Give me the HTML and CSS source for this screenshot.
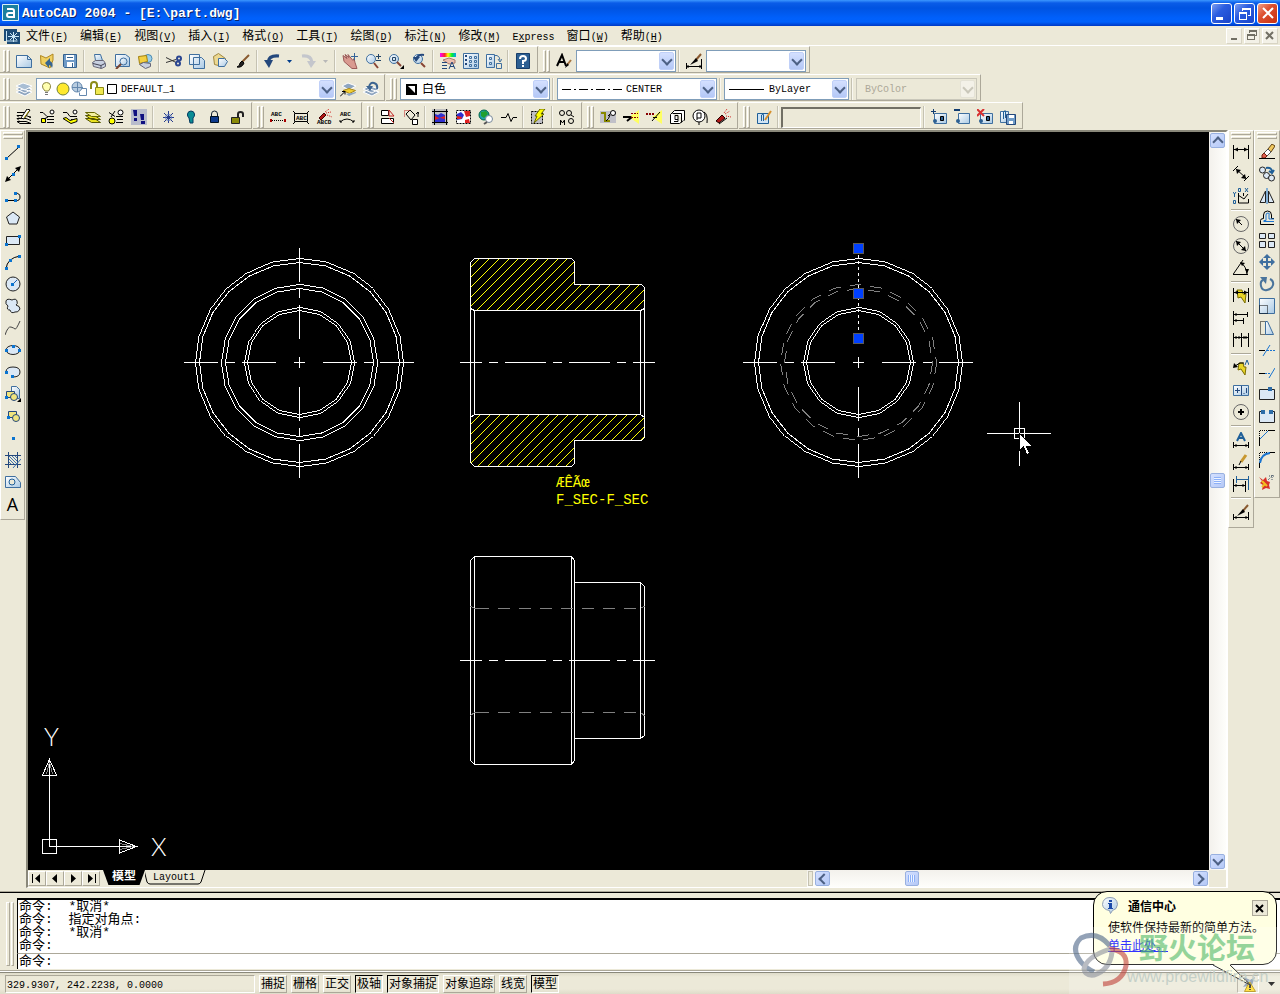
FILE: index.html
```html
<!DOCTYPE html>
<html lang="zh-CN">
<head>
    <meta charset="UTF-8">
    <meta name="viewport" content="width=device-width, initial-scale=1.0">
    <title>AutoCAD 2004 - [E:\part.dwg]</title>
    <link rel="stylesheet" href="styles.css">
</head>
<body>
    <!-- Shared gradients -->
    <svg class="defs" aria-hidden="true">
        <defs>
            <linearGradient id="paper" x1="0" y1="0" x2="1" y2="1"><stop offset="0" stop-color="#fff"/><stop offset="1" stop-color="#a9c9e4"/></linearGradient>
            <linearGradient id="rainbow"><stop offset="0" stop-color="#f0f"/><stop offset=".3" stop-color="#f22"/><stop offset=".5" stop-color="#ff0"/><stop offset=".75" stop-color="#0e3"/><stop offset="1" stop-color="#09f"/></linearGradient>
        </defs>
    </svg>

    <!-- Title bar -->
    <header class="titlebar">
        <svg class="app-logo" width="18" height="18"><path fill="#1b7f9e" stroke="#d8f0f5" d="M.5.5h16v16H.5z"/><path fill="none" stroke="#fff" stroke-width="2" d="M5 5h5q2 0 2 2v6H7q-2 0-2-2t2-2h5"/></svg>
        <h1>AutoCAD 2004 - [E:\part.dwg]</h1>
        <div class="window-buttons">
            <button aria-label="最小化"><svg width="19" height="19"><path d="M4 13h7v3H4z"/></svg></button>
            <button aria-label="还原"><svg width="19" height="19"><path d="M7 4h9v8h-3v-1h2V6H8v1H7zM4 8h8v8H4zm1 2v5h6v-5z"/></svg></button>
            <button class="close" aria-label="关闭"><svg width="19" height="19"><path fill="none" stroke="#fff" stroke-width="2" d="M5 4l10 10M15 4L5 14"/></svg></button>
        </div>
    </header>

    <!-- Menu -->
    <nav class="menubar">
        <svg class="doc-logo" width="16" height="16"><path fill="#1c4b76" d="M0 1h13v3h3v12H3v-3H0z"/><path stroke="#c9e6f5" fill="none" d="M2.5 3v10h11M9.5 4v10M4 8.5h11M6 5l7 7M13 5l-7 7"/></svg>
        <button>文件<span>(<u>F</u>)</span></button>
        <button>编辑<span>(<u>E</u>)</span></button>
        <button>视图<span>(<u>V</u>)</span></button>
        <button>插入<span>(<u>I</u>)</span></button>
        <button>格式<span>(<u>O</u>)</span></button>
        <button>工具<span>(<u>T</u>)</span></button>
        <button>绘图<span>(<u>D</u>)</span></button>
        <button>标注<span>(<u>N</u>)</span></button>
        <button>修改<span>(<u>M</u>)</span></button>
        <button><span>E<u>x</u>press</span></button>
        <button>窗口<span>(<u>W</u>)</span></button>
        <button>帮助<span>(<u>H</u>)</span></button>
        <div class="child-buttons">
            <button aria-label="最小化窗口"><svg width="14" height="14"><path d="M4 9h6v2H4z"/></svg></button>
            <button aria-label="还原窗口"><svg width="14" height="14"><path d="M4 1h8v6h-2V6h1V3H5v1H4zM2 5h8v6H2zm1 2v3h6V7z"/></svg></button>
            <button aria-label="关闭窗口"><svg width="14" height="14"><path fill="none" stroke="#716f64" stroke-width="2" d="M3 3l7 7M10 3l-7 7"/></svg></button>
        </div>
    </nav>

    <!-- Row 1: standard + styles -->
    <div class="toolbar-row">
        <div class="toolbar">
            <i class="grip"></i>
            <button class="tool" aria-label="新建"><svg><path class="paper" d="M.5 2.500h11l4 4v8H.5z"/><path class="steel" d="M11.5 2.500v4h4"/></svg></button>
            <button class="tool" aria-label="打开"><svg><path fill="#f0d060" stroke="#b08820" d="M1.5 2.500L7 5l7-4v6l-3 8-9-4z"/><path fill="#36658f" stroke="none" d="M6 10l5-5v3q4 2 2 7-1-3-3-3v3z"/></svg></button>
            <button class="tool" aria-label="保存"><svg><path fill="#6f9bc7" stroke="#34618f" d="M1.5 1.500h13v13h-12l-1-1z"/><path fill="#fff" stroke="none" d="M4 2h8v5H4zM5 9h7v5H5z"/><path stroke="#34618f" d="M5 4.500h6M10.5 10v4"/></svg></button>
            <i class="sep"></i>
            <button class="tool" aria-label="打印"><svg><path class="paper" stroke="#556" d="M4.500 7.500l-1-6h6l2 6"/><path fill="#c8d0e0" stroke="#667" d="M1.500 9.500l3-2h8l2 3v3l-4 2-8-2z"/><path stroke="#445" d="M2 10.500l8 2 4-2M10 12.500v3"/></svg></button>
            <button class="tool" aria-label="打印预览"><svg><path class="paper" d="M1.500 1.500h10l4 3v9h-14z"/><circle class="paper" cx="9.500" cy="8.500" r="3.500" stroke="#345"/><path stroke="#743" stroke-width="2" d="M7 11l-5 5"/></svg></button>
            <button class="tool" aria-label="发布"><svg><circle fill="#9cd0ea" stroke="#4a88b0" cx="11" cy="5.500" r="4"/><path fill="#f4d040" stroke="#a08010" d="M1.500 3.500l8-1 1 6-8 2z"/><path fill="#c8d0e0" stroke="#667" d="M2.500 11.500l4-2 7 1v3l-5 2z"/></svg></button>
            <i class="sep"></i>
            <button class="tool" aria-label="剪切"><svg><path stroke="#333" d="M0 4.500l10 5M0 9.500l10-3"/><circle stroke="#2a4590" stroke-width="2" cx="13" cy="5.500" r="2"/><circle stroke="#2a4590" stroke-width="2" cx="12" cy="10.500" r="2"/></svg></button>
            <button class="tool" aria-label="复制"><svg><path class="paper" d="M.5 1.500h10v10H.5zM4.500 4.500h8l3 3v8h-11z"/></svg></button>
            <button class="tool" aria-label="粘贴"><svg><path fill="#ecd890" stroke="#a08840" d="M1.500 3.500l5-3 7 5-3 8-8-2z"/><path class="paper" d="M6.500 5.500h6l3 3-3 5h-6z"/></svg></button>
            <button class="tool" aria-label="特性匹配"><svg><path stroke="#8a5a30" stroke-width="2" d="M14 2L7 9"/><path fill="#222" d="M7 8l2 2q-2 5-7 4 3-1 3-4z"/></svg></button>
            <i class="sep"></i>
            <button class="tool" aria-label="放弃"><svg><path stroke="#24487c" stroke-width="3" d="M4 9q1-7 11-6"/><path fill="#24487c" stroke="none" d="M0 7h9l-4 8z"/></svg></button>
            <button class="drop" aria-label="放弃列表"><svg width="5" height="3"><path fill="#003c8c" d="M0 0h5L2.500 3z"/></svg></button>
            <button class="tool" aria-label="重做"><svg><path stroke="#c4c6cc" stroke-width="3" d="M12 9Q11 2 2 3"/><path fill="#c4c6cc" stroke="none" d="M16 8H7l4 7z"/></svg></button>
            <button class="drop" aria-label="重做列表"><svg width="5" height="3"><path fill="#b8b8b8" d="M0 0h5L2.500 3z"/></svg></button>
            <i class="sep"></i>
            <button class="tool" aria-label="实时平移"><svg><path fill="#d99a90" stroke="#9a5a58" d="M1 2.500l4 3-2-4 4 3-1-3 5 6 1-2 1 4 2 6h-5L2 8.500z"/><path stroke="#36659a" d="M12.500 0v7M9 3.500h7"/></svg></button>
            <button class="tool" aria-label="实时缩放"><svg><circle class="paper" cx="6" cy="6" r="4.500" stroke="#456"/><path stroke="#843" stroke-width="2" d="M9 10l4 5"/><path stroke="#246" d="M11 3.500h5M13.500 1v5M11 7.500h5"/></svg></button>
            <button class="tool" aria-label="窗口缩放"><svg><circle class="paper" cx="6" cy="6" r="4.500" stroke="#456"/><path stroke="#246" d="M4.500 4.500h3v3h-3z"/><path stroke="#843" stroke-width="2" d="M9 9l4 4"/><path class="ink" d="M16 12v4h-4z"/></svg></button>
            <button class="tool" aria-label="缩放上一个"><svg><circle class="paper" cx="7" cy="6" r="4.500" stroke="#456"/><path stroke="#24487c" stroke-width="2" d="M5 6q2-5 8-4"/><path fill="#24487c" stroke="none" d="M2 4h7L5 9z"/><path stroke="#843" stroke-width="2" d="M10 10l4 4"/></svg></button>
            <i class="sep"></i>
            <button class="tool" aria-label="特性"><svg><path fill="url(#rainbow)" stroke="none" d="M0 0h16v4H0z"/><path fill="#ecc0b0" stroke="#a87868" d="M3 7l6-2 6 2v3l-6 1z"/><path stroke="#24487c" d="M2 9.500h5M2 12.500h5M2 15.500h5M9 16l3-7 3 7M10 13.500h4"/></svg></button>
            <button class="tool" aria-label="设计中心"><svg><path class="paper" d="M.5.5h15v15H.5z"/><path stroke="#24487c" stroke-dasharray="2 2" stroke-width="2" d="M3 2v12"/><path class="steel" d="M6.500 3.500h2v2h-2zM11.500 3.500h2v2h-2zM6.500 7.500h2v2h-2zM11.500 7.500h2v2h-2zM6.500 11.500h2v2h-2zM11.500 11.500h2v2h-2z"/></svg></button>
            <button class="tool" aria-label="工具选项板"><svg><path class="paper" d="M.5 1.500h8v13h-8z"/><path class="steel" d="M3.500 4.500h2v2h-2zM3.500 9.500h2v2h-2zM8 2.500h3q3 1 3 5M12 6l2 3 2-3M10.500 10.500h5v5h-5z"/></svg></button>
            <i class="sep"></i>
            <button class="tool" aria-label="帮助"><svg><path fill="#2c5f92" stroke="#183e6a" d="M1.500.5h13v15h-13z"/><path stroke="#fff" stroke-width="2" d="M5 6q0-3 3-3t3 2.500Q11 8 8 8v3M8 12v2"/></svg></button>
        </div>
        <div class="toolbar">
            <i class="grip"></i>
            <button class="tool" aria-label="文字样式"><svg><path stroke-width="2" d="M1 13L6 2l4 11M3 9h6"/><path stroke="#a67440" stroke-width="2" d="M15 7l-4 5"/><path class="ink" d="M11 10l2 2-4 3z"/></svg></button>
            <div class="combo w-style"><select aria-label="文字样式控制"><option></option></select><b class="arrow"></b></div>
            <i class="sep"></i>
            <button class="tool" aria-label="标注样式"><svg><path stroke="#8a5a30" stroke-width="2" d="M15 1L9 8"/><path class="ink" d="M10 5l2 3-8 4z"/><path d="M.5 10v6M15.500 6v10M0 13.500h16M2 12v3M14 12v3"/></svg></button>
            <div class="combo w-style"><select aria-label="标注样式控制"><option></option></select><b class="arrow"></b></div>
        </div>
    </div>

    <!-- Row 2: layers + properties -->
    <div class="toolbar-row">
        <div class="toolbar tight-end">
            <i class="grip"></i>
            <button class="tool" aria-label="图层特性管理器"><svg><path fill="#8fa6c0" stroke="#fff" d="M0 11l7-3 9 3-7 4zM0 8l7-3 9 3-7 4z"/><path fill="#a9bed4" stroke="#fff" d="M0 5l7-3 9 3-7 4z"/></svg></button>
            <div class="combo w-layer">
                <svg class="layer-state" width="78" height="16">
                    <path fill="#ffffb0" stroke="#8a8440" d="M4 10Q1 7 1.500 4.500 2 1.500 5.500 1.500t4 3Q10 7 7.500 10z"/><path stroke="#777" fill="none" d="M4 11.500h3M4 13.500h3"/>
                    <circle cx="22" cy="8" r="6" fill="#ffe92e" stroke="#70803a"/>
                    <circle cx="36" cy="6" r="5" fill="#b8cce0" stroke="#6588ae"/><path stroke="#6588ae" fill="none" d="M36.500 1v10M31 6.500h11M40.500 7.500h5v7h-7v-3"/>
                    <path fill="none" stroke="#8c8c18" stroke-width="2" d="M50 8V4q0-3 3-3t3 3v4"/><path fill="#f0e850" stroke="#8c8c18" d="M54.500 6.500h8v7h-8z"/>
                    <path fill="#fff" stroke="#000" d="M66.500 3.500h9v9h-9z"/>
                </svg>
                <select aria-label="图层"><option>DEFAULT_1</option></select><b class="arrow"></b>
            </div>
            <button class="tool" aria-label="将对象的图层置为当前"><svg><path fill="#8fa6c0" stroke="#fff" d="M2 5l6-3 8 3-7 4z"/><path fill="#f2ce30" stroke="#a8881c" d="M3 9.500l6-2 6.500 2-6 3z"/><path fill="#8fa6c0" stroke="none" d="M6 13l3 2 7-3v-1z"/><path d="M0 15.500l5-5M2 10.500h3v3"/></svg></button>
            <button class="tool" aria-label="上一个图层"><svg><path fill="#8fa6c0" stroke="#fff" d="M0 11l7-3 9 3-7 4zM0 8l7-3 9 3-7 4z"/><path stroke="#3d6591" stroke-width="2" d="M6 6q1-5 5-4 4 1 3 6"/><path fill="#3d6591" stroke="none" d="M3 5h7l-3 5z"/></svg></button>
        </div>
        <div class="toolbar">
            <i class="grip"></i>
            <div class="combo w-color"><svg class="swatch" width="11" height="11"><path d="M0 0h11v11H0z"/><path fill="#fff" d="M2 2l7 7V2z"/></svg><select class="cjk" aria-label="颜色"><option>白色</option></select><b class="arrow"></b></div>
            <i class="sep"></i>
            <div class="combo w-ltype"><svg class="line-sample" width="62" height="3"><path stroke="#000" stroke-dasharray="9 3 2 3" d="M0 1.500h60"/></svg><select aria-label="线型"><option>CENTER</option></select><b class="arrow"></b></div>
            <i class="sep"></i>
            <div class="combo w-lweight"><svg class="line-sample" width="38" height="3"><path stroke="#000" d="M0 1.500h35"/></svg><select aria-label="线宽"><option>ByLayer</option></select><b class="arrow"></b></div>
            <i class="sep"></i>
            <div class="combo w-plot disabled"><select disabled aria-label="打印样式"><option>ByColor</option></select><b class="arrow"></b></div>
        </div>
    </div>

    <!-- Row 3: express tools -->
    <div class="toolbar-row">
        <div class="toolbar">
            <i class="grip"></i>
            <button class="tool" aria-label="图层管理"><svg><path d="M1 3.500h11M4 14.500l-3-2h9l5 2zM3 11.500l-2-2h9l5 2M3 8.500l-2-2h9l5 2M14 7v2"/><path fill="#fff" d="M5 9l6-9 3 1-6 9z"/><path stroke="#a09000" d="M13 2L8 9"/></svg></button>
            <button class="tool" aria-label="图层匹配"><svg><path fill="#ff0" d="M2.500 9.500h4v4h-4z"/><path d="M1 3.500h3l4 4h7M8 10.500h7M8 13.500h7M9 8l-4 2"/><circle fill="#fff" cx="13" cy="3" r="2"/></svg></button>
            <button class="tool" aria-label="更改为当前图层"><svg><path d="M1 3.500h4l3 4h7M9 10.500h6"/><path fill="#ff0" d="M1 9.500l3-1 4 3 7-2v3l-6 2z"/><circle fill="#fff" cx="13" cy="3" r="2"/></svg></button>
            <button class="tool" aria-label="图层隔离"><svg><path fill="#e8e020" stroke="#555500" d="M.5 9.500h9l6 4h-9zM.5 6.500h9l6 4h-9z"/><path fill="#f4f0a0" stroke="#666600" d="M.5 3.500h9l6 4h-9z"/></svg></button>
            <button class="tool" aria-label="复制到新图层"><svg><circle fill="#ff0" cx="4" cy="12" r="3"/><circle fill="#fff" cx="12.500" cy="3.500" r="2.500"/><path d="M1 3.500l6 4M7 2L3 8M8 7.500h7M9 10.500h6M8 13.500h7"/></svg></button>
            <button class="tool" aria-label="图层漫游"><svg><path fill="#b8bccc" stroke="none" d="M0 0h16v16H0z"/><path fill="#101080" stroke="none" d="M2 1h4v6H3zM3 9h3v3H3zM9 5h4v6h-3zM10 12h4v3h-4z"/></svg></button>
            <i class="sep"></i>
            <button class="tool" aria-label="图层冻结"><svg><path stroke="#283c8c" d="M8.500 2v12M3 8.500h11M4 4l9 9M13 4l-9 9"/><circle cx="8.500" cy="8.500" r="3" stroke="#5a7ac0"/></svg></button>
            <button class="tool" aria-label="图层关闭"><svg><path fill="#0a8c94" stroke="#053a60" d="M6 9Q4 7 4.500 5q.5-3 3.500-3t3.500 3Q12 7 10 9v5H7z"/></svg></button>
            <button class="tool" aria-label="图层锁定"><svg><path stroke="#123" d="M5.500 7V5q0-3 3-3t3 3v2"/><path fill="#0d3a8c" stroke="#012" d="M4.500 7.500h8v6h-8z"/></svg></button>
            <button class="tool" aria-label="图层解锁"><svg><path stroke="#222" stroke-width="2" d="M9 8V5q0-2 2.500-2T14 5v3"/><path fill="#8a8a08" stroke="#222" d="M2.500 8.500h8v6h-8z"/></svg></button>
        </div>
        <div class="toolbar">
            <i class="grip"></i>
            <button class="tool" aria-label="弧形文字"><svg><text x="1" y="7">ABC</text><path d="M0 11.500h16" stroke-dasharray="1 1"/><path fill="#a00" stroke="none" d="M0 10h2v3H0zM14 10h2v3h-2z"/></svg></button>
            <button class="tool" aria-label="文字遮罩"><svg><path d="M1.500 4.500h13v8h-13zM0 2l2 2M16 2l-2 2M0 15l2-2M16 15l-2-2"/><text x="3" y="11">ABC</text></svg></button>
            <button class="tool" aria-label="分解文字"><svg><text x="1" y="15">ABCD</text><path fill="#b01818" stroke="#400" d="M3 9l5-5 2 2-5 5z"/><path stroke="#d02020" stroke-dasharray="1 1" d="M9 3l4-3M10 4l5-1M11 6l5 2"/></svg></button>
            <button class="tool" aria-label="对齐文字"><svg><text x="1" y="7">ABC</text><path d="M1 13q7-6 14 0M1 13v-2M1 13h2M15 13v-2M15 13h-2"/></svg></button>
        </div>
        <div class="toolbar">
            <i class="grip"></i>
            <button class="tool" aria-label="多重选择"><svg><path fill="#fff" d="M1.500 1.500h7v5h-7zM1.500 9.500h12v5h-12z"/><path stroke="#c02020" d="M9 1l5 6H9zM9 9l5 5"/></svg></button>
            <button class="tool" aria-label="移动复制旋转"><svg><path d="M3 5l4-4 5 5-4 5z"/><path stroke="#c02020" stroke-dasharray="1 1" d="M1.500 7.500v-6h6"/><path fill="#fff" d="M9.500 10.500h5v5h-5zM15 8V3M13 5l2-2 1 2"/></svg></button>
            <i class="sep"></i>
            <button class="tool" aria-label="延伸修剪"><svg><path fill="#c0c0c0" stroke="none" d="M0 0h16v16H0z"/><path fill="#3030d0" stroke="none" d="M3 5l3 1 3-2 4 2v7H3z"/><path fill="#e02020" stroke="none" d="M3 7l4 2 6-2v3l-5-1-5 2z"/><path d="M2.500 0v16M14.500 0v16M0 2.500h16M0 13.500h16"/></svg></button>
            <button class="tool" aria-label="区域覆盖"><svg><path fill="#fff" stroke-dasharray="2 1" d="M1.500 1.500h14v13h-14z"/><path fill="#3030d0" stroke="none" d="M2 5l4-2 3 3-2 4-5 1z"/><path fill="#e02020" stroke="none" d="M9 2h6v5l-4 1zM2 7l5 1-1 2H2zM10 11l4-1 1 4h-5z"/></svg></button>
            <button class="tool" aria-label="图像"><svg><circle cx="6" cy="6" r="5" fill="#20a0b0" stroke="#064"/><path fill="#20a030" stroke="none" d="M3 3l5-1 2 3-4 4-3-2z"/><circle cx="11" cy="10" r="3.500" fill="#fff" stroke="#789"/><path stroke="#555" stroke-width="2" d="M9 13l-3 2"/></svg></button>
            <button class="tool" aria-label="折断线"><svg><path d="M0 8.500h5l2-4 3 8 2-4h4"/></svg></button>
            <i class="sep"></i>
            <button class="tool" aria-label="超级填充"><svg><path fill="#c0c0c8" stroke-dasharray="2 1" d="M1.500 2.500h11v12h-11z"/><path fill="#ff0" stroke="#660" d="M10 0h5l-4 5h3L4 14l3-7H5z"/></svg></button>
            <i class="sep"></i>
            <button class="tool" aria-label="移动备份"><svg><circle cx="3" cy="4" r="2.500"/><circle cx="10" cy="4" r="2.500"/><circle cx="12" cy="12" r="2.500"/><path d="M1.500 16v-5l2 3 2-3v5M12 6l3 2"/></svg></button>
        </div>
        <div class="toolbar">
            <i class="grip"></i>
            <button class="tool" aria-label="附着引线"><svg><path fill="#c0c0c8" stroke="none" d="M0 2h16v12H0z"/><path stroke="#880" stroke-width="2" d="M1 4h4v8h5"/><path d="M6 12q3-2 4-6M8 7l2-2"/><circle cx="13" cy="4" r="2.500" fill="#fff"/></svg></button>
            <button class="tool" aria-label="左引线"><svg><path fill="#ffff60" stroke="none" d="M6 8l10-7v14z"/><path stroke-width="2" d="M0 8h8M4 12l5-4"/><path stroke="#800" stroke-dasharray="2 1" d="M8 4.500h7M8 8.500h7"/></svg></button>
            <button class="tool" aria-label="右引线"><svg><path fill="#ffff60" stroke="none" d="M6 8l10-7v14z"/><path stroke="#800" stroke-width="2" stroke-dasharray="2 1" d="M0 5h8"/><path d="M6 12l8-9M7 8.500h4"/></svg></button>
            <button class="tool" aria-label="块替换"><svg><path fill="#fff" d="M5.500 1.500h10v10M5.500 1.500l-4 4v9h9l4-3M3.500 4.500h9v9"/><path d="M5 12.500h4v-6H6v4h3"/></svg></button>
            <button class="tool" aria-label="块属性"><svg><circle cx="7" cy="7" r="6" fill="#fff"/><path d="M5 11V4h4v5H5M12 3q4 2 3 11M7 13v3"/></svg></button>
            <button class="tool" aria-label="分解属性"><svg><path fill="#b01818" stroke="#200" d="M1 12l6-6 3 3-6 5z"/><path d="M4 15l8-6"/><path stroke="#d02020" stroke-dasharray="1 1" d="M9 4l3-4M10 5l5-3M11 7l5 1"/></svg></button>
        </div>
        <div class="toolbar">
            <i class="grip"></i>
            <button class="tool" aria-label="块在位编辑"><svg><path fill="#cfe4f5" stroke="#1f5f98" d="M1.500 4.500h11v10h-11z"/><path stroke="#1f5f98" d="M5.500 12V6q2-2 2 0v6"/><path stroke="#d8902c" stroke-width="2" d="M15 2L9 11"/></svg></button>
            <i class="sep"></i>
            <input class="ref-name" type="text" aria-label="参照名称" disabled>
            <i class="sep"></i>
            <button class="tool" aria-label="添加到工作集"><svg><path class="paper" stroke="#123" d="M3.500 4.500h12v10h-12z"/><path fill="#2c5f92" d="M9.500 7.500h3v4h-3z"/><circle cx="4" cy="12" r="2" fill="#2c5f92" stroke="none"/><path stroke="#123c70" d="M0 2.500h5M2.500 0v5"/></svg></button>
            <button class="tool" aria-label="从工作集删除"><svg><path class="paper" stroke="#123" d="M4.500 4.500h11v10h-11z"/><circle cx="4" cy="12" r="2" fill="#2c5f92" stroke="none"/><path stroke="#123c70" stroke-width="2" d="M0 1h6"/></svg></button>
            <button class="tool" aria-label="放弃参照修改"><svg><path class="paper" stroke="#123" d="M3.500 4.500h12v10h-12z"/><path fill="#2c5f92" d="M9.500 7.500h3v4h-3z"/><circle cx="4" cy="12" r="2" fill="#2c5f92" stroke="none"/><path stroke="#d83030" stroke-width="2" d="M0 0l7 7M7 0L0 7"/></svg></button>
            <button class="tool" aria-label="保存参照修改"><svg><path class="paper" d="M.5 2.500h8v11h-8z"/><path stroke="#1f5f98" d="M3.500 10V3q2-3 2 0v6"/><path fill="#6f9bc7" stroke="#24487c" d="M6.500 5.500h9v10h-9z"/><path fill="#fff" stroke="none" d="M9 6h5v3H9zM9 12h4v3H9z"/></svg></button>
        </div>
    </div>

    <main class="workspace">
        <!-- Draw toolbar -->
        <div class="toolbar vertical draw">
            <i class="grip"></i>
            <button class="tool" aria-label="直线"><svg><path d="M2 14L14 3"/><path class="node" d="M0 13h3v3H0zM12 1h3v3h-3z"/></svg></button>
            <button class="tool" aria-label="构造线"><svg><path d="M1 15L15 1"/><path class="ink" d="M0 16l2-6 4 4zM16 0l-2 6-4-4z"/><path class="node" d="M7 7h3v3H7z"/></svg></button>
            <button class="tool" aria-label="多段线"><svg><path d="M1 12.500h9M10 5q5 0 5 4t-4 3.500"/><path class="node" d="M0 11h3v3H0zM9 11h3v3H9zM9 4h3v3H9z"/></svg></button>
            <button class="tool" aria-label="正多边形"><svg><path class="shape" d="M8 2l6.500 5-2.500 7H4L1.500 7z"/></svg></button>
            <button class="tool" aria-label="矩形"><svg><path class="shape" d="M1.500 4.500h13v8h-13z"/><path class="node" d="M0 11h3v3H0zM13 3h3v3h-3z"/></svg></button>
            <button class="tool" aria-label="圆弧"><svg><path d="M1 15Q2 4 15 2"/><path class="node" d="M0 13h3v3H0zM4 5h3v3H4zM13 1h3v3h-3z"/></svg></button>
            <button class="tool" aria-label="圆"><svg><circle class="shape" cx="8" cy="8" r="7"/><path stroke="#1a62b4" d="M8 8l4-4"/><path class="node" d="M6 7h3v3H6z"/></svg></button>
            <button class="tool" aria-label="修订云线"><svg><path class="shape" d="M3 8Q0 6 1 3t6-1q4-2 5 1t-1 4q4 1 4 4-2 4-5 3-4 2-5-2-4 0-2-4z"/></svg></button>
            <button class="tool" aria-label="样条曲线"><svg><path stroke="#444" d="M0 15Q3 6 6 7t4 2 5-8"/></svg></button>
            <button class="tool" aria-label="椭圆"><svg><ellipse class="shape" cx="8" cy="8" rx="7" ry="4.500"/><path class="node" d="M0 7h3v3H0zM13 7h3v3h-3zM7 3h3v3H7z"/></svg></button>
            <button class="tool" aria-label="椭圆弧"><svg><path class="shape" d="M1 8q0-5 7-5t7 5-7 5"/><path class="node" d="M0 7h3v3H0zM6 11h3v3H6z"/></svg></button>
            <button class="tool" aria-label="插入块"><svg><path class="paper" d="M6.500.5h5l3 3v9h-8z"/><path fill="#f0e47c" stroke="#24487c" d="M1.500 5.500h8v6h-8z"/><circle fill="#f0e47c" stroke="#24487c" cx="9" cy="11" r="3.500"/><path class="node" d="M0 10h3v3H0z"/><path class="ink" d="M16 12v4h-4z"/></svg></button>
            <button class="tool" aria-label="创建块"><svg><path fill="#f0e47c" stroke="#24487c" d="M3.500 3.500h8v6h-8z"/><circle fill="#f0e47c" stroke="#24487c" cx="11" cy="10" r="3.500"/><path class="node" d="M2 8h3v3H2z"/></svg></button>
            <button class="tool" aria-label="点"><svg><path class="node" d="M7 7h3v3H7z"/></svg></button>
            <button class="tool" aria-label="图案填充"><svg><path fill="#fff" stroke="#24487c" d="M0 3.500h16M0 12.500h16M3.500 0v16M12.500 0v16"/><path stroke="#4274ac" d="M4 4l8 8M7 4l5 5M4 7l5 5M10 4l2 2M4 10l2 2M8 16l8-9"/></svg></button>
            <button class="tool" aria-label="面域"><svg><path class="paper" stroke="#1f5f98" d="M.5 2.500h10l5 6v5H.5z"/><circle cx="7" cy="8" r="3" fill="#ece9d8" stroke="#1f5f98"/></svg></button>
            <button class="tool letter" aria-label="多行文字">A</button>
        </div>

        <section class="document">
            <div class="view">
                <svg class="canvas">
                    <defs>
                        <polygon id="gon24" points="1000,0 966,259 866,500 707,707 500,866 259,966 0,1000 -259,966 -500,866 -707,707 -866,500 -966,259 -1000,0 -966,-259 -866,-500 -707,-707 -500,-866 -259,-966 0,-1000 259,-966 500,-866 707,-707 866,-500 966,-259"/>
                        <polygon id="gon20" points="1000,0 951,309 809,588 588,809 309,951 0,1000 -309,951 -588,809 -809,588 -951,309 -1000,0 -951,-309 -809,-588 -588,-809 -309,-951 0,-1000 309,-951 588,-809 809,-588 951,-309"/>
                        <polygon id="gon16" points="1000,0 924,383 707,707 383,924 0,1000 -383,924 -707,707 -924,383 -1000,0 -924,-383 -707,-707 -383,-924 0,-1000 383,-924 707,-707 924,-383"/>
                        <clipPath id="cut"><path d="M474 258h98l3 3v23h67l3 3v23H470v-48zM470 414h175v23l-3 3h-67v23l-3 3h-98l-4-4z"/></clipPath>
                        <!-- circles and centre lines common to both end views -->
                        <g id="endview">
                            <use href="#gon24" transform="scale(.104)"/><use href="#gon24" transform="scale(.1)"/>
                            <use href="#gon16" transform="scale(.055)"/><use href="#gon16" transform="scale(.052)"/>
                            <path d="M-115.500 0h34M-73.500 0h9M-57.500 0h34M-5.500 0h11M23.500 0h34M64.500 0h9M80.500 0h34M0-5.500v11M0 24.500v34M0 65.500v9M0 81.500v34"/>
                        </g>
                        <path id="axis" d="M460 0h22M489 0h9M505 0h41M553 0h9M569 0h41M617 0h9M633 0h22"/>
                    </defs>
                    <g transform="translate(-28 -132)">
                        <!-- left view -->
                        <g transform="translate(299.500 362.500)">
                            <use href="#endview"/>
                            <use href="#gon20" transform="scale(.078)"/><use href="#gon20" transform="scale(.074)"/>
                            <path d="M0-114.500v34M0-73.500v9M0-57.500v34"/>
                        </g>

                        <!-- section F -->
                        <g clip-path="url(#cut)"><path class="hatch" transform="skewX(-45)" d="M718 362H1115"/></g>
                        <path d="M474.500 258.500h97l3 3v23h67l3 3v150l-3 3h-67v23l-3 3h-97l-4-4v-200zM470.500 308.500l4 2h166l4-2M470.500 417.500l4-3h166l4 3M474.500 310v104M640.500 310v104"/>
                        <use href="#axis" y="362.500"/>
                        <text class="note" x="556" y="487">ÆÊÃœ</text>
                        <text class="note" x="556" y="504">F_SEC-F_SEC</text>

                        <!-- right view, centre line selected -->
                        <g transform="translate(858.500 362.500)">
                            <use href="#endview"/>
                            <g class="hidden-line"><use href="#gon20" transform="scale(.078)"/><use href="#gon20" transform="scale(.074)"/></g>
                            <path stroke-dasharray="3 3" d="M0-107.500V-24"/>
                            <path class="handle" d="M-5-119H5v10H-5zM-5-74H5v10H-5zM-5-29H5v10H-5z"/>
                        </g>

                        <!-- plan -->
                        <path d="M474.500 556.500h97l3 4v200l-3 4h-97l-4-4v-200zM474.500 556v208M571.500 556v208M574.500 582.500h66l4 4v149l-4 3h-66M640.500 582v156"/>
                        <path class="hidden-line" d="M474 608.500h3M477 608.500h164M474 712.500h3M477 712.500h164M470 606l4 2M641 608l4-2M470 716l4-3M641 713l4 3"/>
                        <use href="#axis" y="660.500"/>

                        <!-- UCS icon -->
                        <path d="M42.500 839.500h14v14h-14zM49.500 846.500V759M49.500 846.500H137M49.500 759.500l-7 15.500h14zM136.500 846.500L119.500 840v13z"/>
                        <path class="hidden-line solid" d="M49.500 762l-3 12M49.500 762l3 12M133 846.500l-13-3M133 846.500l-13 3"/>
                        <text class="ucs" x="44" y="746">Y</text>
                        <text class="ucs" x="151" y="856">X</text>

                        <!-- crosshair -->
                        <path d="M987 433.500h64M1019.500 402v64M1014.500 428.500h10v10h-10z"/>
                        <path class="pointer" d="M1019.500 433.500v17l4-4 3 8 3-1-3-7h6z"/>
                    </g>
                </svg>
                <div class="scroll-v">
                    <button class="sb up" aria-label="向上滚动"></button>
                    <i></i>
                    <button class="sb thumb" aria-label="垂直滑块"></button>
                    <i></i>
                    <button class="sb down" aria-label="向下滚动"></button>
                </div>
            </div>
            <div class="sheet-row">
                <div class="sheets">
                    <button class="nav" aria-label="第一个"><svg width="10" height="9"><path d="M0 0h1v9H0zM8 0v9L3 4.500z"/></svg></button>
                    <button class="nav" aria-label="上一个"><svg width="10" height="9"><path d="M7 0v9L2 4.500z"/></svg></button>
                    <button class="nav" aria-label="下一个"><svg width="10" height="9"><path d="M3 0v9l5-4.500z"/></svg></button>
                    <button class="nav" aria-label="最后一个"><svg width="10" height="9"><path d="M9 0h1v9H9zM2 0v9l5-4.500z"/></svg></button>
                    <button class="sheet current">模型</button>
                    <button class="sheet"><svg width="64" height="15"><path d="M-1 0l3 12q1 2 3 2h48q2 0 3-2l4-12"/></svg>Layout1</button>
                </div>
                <div class="scroll-h">
                    <i class="split"></i>
                    <button class="sb left" aria-label="向左滚动"></button>
                    <i></i>
                    <button class="sb thumb" aria-label="水平滑块"></button>
                    <i></i>
                    <button class="sb right" aria-label="向右滚动"></button>
                </div>
            </div>
        </section>

        <!-- Dimension toolbar -->
        <div class="toolbar vertical">
            <i class="grip"></i>
            <button class="tool" aria-label="线性标注"><svg><path d="M.5 1v14M15.500 1v14M1 5.500h14"/><path class="ink" d="M1 5.500l4-2v4zM15 5.500l-4-2v4z"/></svg></button>
            <button class="tool" aria-label="对齐标注"><svg><path d="M5 0L0 5M16 10l-5 5M3 3l10 9"/><path class="ink" d="M3 3l5 1-4 4zM13 13l-5-1 4-4z"/></svg></button>
            <button class="tool" aria-label="坐标标注"><svg><path d="M5.500 5v10h10v-4M5 7l6 4 4-5M10.500 5v3"/><path stroke="#1f5f98" d="M0 4l1.500 2L3 4M1.500 6v3M.5 12.500h2v3h-2zM5.500.5h2v3h-2zM12 0l3 4M15 0l-3 4"/></svg></button>
            <i class="sep"></i>
            <button class="tool" aria-label="半径标注"><svg><circle cx="8" cy="8" r="7.500" stroke="#666"/><path d="M3 3l6 6"/><path class="ink" d="M3 3l5 1-4 4z"/></svg></button>
            <button class="tool" aria-label="直径标注"><svg><circle cx="8" cy="8" r="7.500" stroke="#666"/><path d="M3 3l10 10"/><path class="ink" d="M3 3l5 1-4 4zM13 13l-5-1 4-4z"/></svg></button>
            <button class="tool" aria-label="角度标注"><svg><path d="M10 0L0 14.500h15M8 3q5 3 6 11"/><path class="ink" d="M7 2l5 1-3 3zM14 14l-2-5h4z"/></svg></button>
            <i class="sep"></i>
            <button class="tool" aria-label="快速标注"><svg><path fill="#e8d428" stroke="#7a6c00" d="M4 2h5l1 4h3l-1 9-4-6-3 1z"/><path d="M.5 0v14M15.500 0v14M1 4.500h14"/><path class="ink" d="M1 4.500l4-2v4zM15 4.500l-4-2v4z"/></svg></button>
            <button class="tool" aria-label="基线标注"><svg><path d="M.5 1v14M1 4.500h14M1 10.500h9M10.500 8v6M14.500 2v5M3 3v3M3 9v3"/></svg></button>
            <button class="tool" aria-label="连续标注"><svg><path d="M.5 1v14M8.500 1v14M15.500 1v14M1 5.500h14M3 4v3M6 4v3M11 4v3M13 4v3"/></svg></button>
            <i class="sep"></i>
            <button class="tool" aria-label="快速引线"><svg><path fill="#e8d428" stroke="#7a6c00" d="M6 3h4l1 4h2l-1 8-4-6-3 1z"/><path d="M2 6l5-3h4"/><path class="ink" d="M0 8l1-5 4 4z"/><path stroke="#1f5f98" d="M12 5l2-5 2 5"/></svg></button>
            <button class="tool" aria-label="公差"><svg><path class="paper" d="M.5 3.500h15v10H.5z"/><path stroke="#24487c" d="M8.500 4v9M2 8.500h5M4.500 6v5M11 11v1M13.500 6v5"/></svg></button>
            <button class="tool" aria-label="圆心标记"><svg><circle cx="8" cy="8" r="7.500" stroke="#666"/><path stroke-width="2" d="M5 8h6M8 5v6"/></svg></button>
            <i class="sep"></i>
            <button class="tool" aria-label="编辑标注"><svg><path stroke="#1f5f98" stroke-width="2" d="M4 9l4-8 4 8M6 6h4"/><path d="M.5 10v6M15.500 10v6M1 13.500h14M3 12v3M13 12v3"/></svg></button>
            <button class="tool" aria-label="编辑标注文字"><svg><path stroke="#c89830" stroke-width="3" d="M13 1L8 8"/><path d="M8 7l-2 4M.5 10v6M15.500 10v6M1 13.500h14M3 12v3M13 12v3"/></svg></button>
            <button class="tool" aria-label="标注更新"><svg><path stroke="#1f5f98" d="M3.500 0v7M15.500 0v14M4 3.500h11"/><path d="M.5 3v13M12.500 5v11M1 9.500h11M3 8v3M10 8v3"/></svg></button>
            <i class="sep"></i>
            <button class="tool" aria-label="标注样式"><svg><path stroke="#8a5a30" stroke-width="2" d="M15 1L9 8"/><path class="ink" d="M10 5l2 3-8 4z"/><path d="M.5 10v6M15.500 8v8M1 13.500h14M3 12v3M13 12v3"/></svg></button>
        </div>

        <!-- Modify toolbar -->
        <div class="toolbar vertical">
            <i class="grip"></i>
            <button class="tool" aria-label="删除"><svg><path fill="#f0c860" stroke="#604010" d="M9 5l4-5 3 2-4 6z"/><path fill="#fff" stroke="#555" d="M5 9l4-4 3 3-4 4z"/><path fill="#e06050" stroke="#702010" d="M3 11l2-2 3 3-2 2H3z"/><path d="M0 14.500h16"/></svg></button>
            <button class="tool" aria-label="复制对象"><svg><circle class="shape" cx="3.500" cy="4" r="3"/><circle class="shape" cx="7.500" cy="9.500" r="3"/><circle class="shape" cx="12.500" cy="12" r="3"/><path stroke="#1f5f98" stroke-width="2" d="M7 2q6-1 6 4M10 5l3 2 2-3"/></svg></button>
            <button class="tool" aria-label="镜像"><svg><path class="shape" d="M1 14.500L6.500 3v11.500zM15 14.500L9.500 3v11.500z"/><path stroke="#1a74d0" d="M8 0v16"/></svg></button>
            <button class="tool" aria-label="偏移"><svg><path d="M15 14.500H1.500v-4q0-2 3-2V5q0-4 4-4t4 4v3.500H15"/><path stroke="#1a74d0" d="M15 11.500H5q-1 0 0-1h2V5q0-2 2-2t1 2v4h5"/></svg></button>
            <button class="tool" aria-label="阵列"><svg><path class="shape" d="M.5 1.500h6v5h-6zM9.500 1.500h6v5h-6zM.5 9.500h6v6h-6zM9.500 9.500h6v6h-6z"/></svg></button>
            <button class="tool" aria-label="移动"><svg><path stroke="#3f6f9f" stroke-width="2" d="M8 1v14M1 8h14"/><path fill="#3f6f9f" stroke="none" d="M8 0l4 4H4zM8 16l4-4H4zM0 8l4-4v8zM16 8l-4-4v8z"/></svg></button>
            <button class="tool" aria-label="旋转"><svg><path stroke="#4a749c" stroke-width="2" d="M11 3q4 2 3 6t-6 5-6-4 2-6"/><path fill="#4a749c" stroke="none" d="M1 1h7l-1 7z"/></svg></button>
            <button class="tool" aria-label="缩放"><svg><path class="paper" d="M.5.5h15v15H.5z"/><path stroke-dasharray="1 1" d="M.5 7.500h8v8h-8z"/></svg></button>
            <button class="tool" aria-label="拉伸"><svg><path stroke-dasharray="1 1" d="M6.500 1.500h-5v13h5"/><path class="paper" stroke="#24487c" d="M6.500 1.500h2l6 13h-8z"/></svg></button>
            <button class="tool" aria-label="修剪"><svg><path d="M0 8.500h6"/><path stroke="#1a74d0" d="M4 14l7-11"/><path stroke="#1a74d0" stroke-dasharray="2 1" d="M8 8.500h8"/></svg></button>
            <button class="tool" aria-label="延伸"><svg><path d="M0 9.500h6"/><path stroke="#1a74d0" d="M10 14l6-10"/><path stroke="#1a74d0" stroke-dasharray="2 1" d="M6 9.500h6"/></svg></button>
            <button class="tool" aria-label="打断于点"><svg><path class="shape" d="M.5 3.500h15v10H.5z"/><path fill="#2c6ca8" stroke="none" d="M9 1h4v4H9z"/></svg></button>
            <button class="tool" aria-label="打断"><svg><path class="shape" d="M4 3.500H.5v11h15v-11H12"/><path fill="#2c6ca8" stroke="none" d="M2 2h4v4H2zM10 2h4v4h-4z"/></svg></button>
            <button class="tool" aria-label="倒角"><svg><path stroke-dasharray="1 1" d="M.5 8V.5H9"/><path d="M.5 8v8M9 .5h7"/><path stroke="#1a74d0" d="M1 9l8-8"/></svg></button>
            <button class="tool" aria-label="圆角"><svg><path stroke-dasharray="1 1" d="M.5 8V.5H9"/><path d="M.5 10v6M10 .5h6"/><path stroke="#1a74d0" stroke-width="2" d="M1 11Q2 2 11 1"/></svg></button>
            <button class="tool" aria-label="分解"><svg><path fill="#d83028" stroke="none" d="M0 3l4 3 3-3 1 4 3 1-1 3 1 4-4-1-4 2 1-5-3-2 2-2z"/><path stroke="#f0c020" stroke-width="2" d="M3 7l5 5M3 13l3-3"/><path stroke="#456" stroke-dasharray="1 1" d="M9 6l5-5M10 2h6M13 6V0"/></svg></button>
        </div>
    </main>

    <!-- Command line -->
    <section class="dock">
        <i class="grip"></i>
        <div class="command">
            <div class="history">
                <p>命令:&nbsp; *取消*</p>
                <p>命令:&nbsp; 指定对角点:</p>
                <p>命令:&nbsp; *取消*</p>
                <p>命令:</p>
            </div>
            <div class="prompt"><label for="cmd">命令:</label><input type="text" id="cmd"></div>
        </div>
    </section>

    <!-- Status bar -->
    <footer class="statusbar">
        <span class="coords">329.9307, 242.2238, 0.0000</span>
        <button>捕捉</button>
        <button>栅格</button>
        <button>正交</button>
        <button class="on">极轴</button>
        <button class="on">对象捕捉</button>
        <button>对象追踪</button>
        <button>线宽</button>
        <button class="on">模型</button>
        <div class="tray">
            <svg width="22" height="18"><path fill="#7d93ad" d="M6 1l6 3 5-3-3 8-9 2 3-4z"/><path fill="#ffd91a" stroke="#b08a00" d="M11.500 5.500l6 10h-11z"/><path stroke="#222" stroke-width="2" d="M12 9v3M12 13v1"/></svg>
            <svg width="7" height="4"><path d="M0 0h7L3.500 4z"/></svg>
        </div>
    </footer>

    <!-- Communication Center balloon -->
    <aside class="balloon">
        <svg class="tail" width="48" height="24"><path d="M5 0l38 22L22 0z"/><path fill="none" stroke="#000" d="M5 1l38 20.500L22 1"/></svg>
        <h2><svg width="18" height="18"><path fill="url(#paper)" stroke="#8b9cb5" d="M8 .5q7 0 7.500 7-.5 5-5 6l-2 3-1-3Q1 12.500.5 7.500q.5-7 7.500-7z"/><path fill="#1b4aa8" d="M7 3h3v2H7zM6 6h4v5h1v1H6v-1h1V7H6z"/></svg>通信中心</h2>
        <button aria-label="关闭通知"><svg width="13" height="13"><path stroke="#000" stroke-width="2" d="M3 3l7 7M10 3l-7 7"/></svg></button>
        <p>使软件保持最新的简单方法。</p>
        <p><a href="#">单击此处。</a></p>
    </aside>

    <!-- Forum mark -->
    <div class="forum-mark">
        <svg width="60" height="60"><path stroke="#4d6688" d="M38 14Q25-2 9 6q-11 10 0 24 5 6 13 10"/><path stroke="#c04038" d="M36 17q20 1 18 17-4 17-23 18"/><path stroke="#8b909c" d="M38 17Q14 25 12 37q1 7 10 6Q38 38 40 20"/></svg>
        <div>
            <strong>野火论坛</strong>
            <span>www.proewildfire.cn</span>
        </div>
    </div>
</body>
</html>
```
FILE: styles.css
```css
* {
    box-sizing: border-box;
}
body {
    display: flex;
    flex-direction: column;
    height: 100vh;
    margin: 0;
    overflow: hidden;
    position: relative;
    background: #ece9d8;
    color: #000;
    font-family: "Liberation Mono", "Noto Sans CJK SC", monospace;
    font-size: 12px;
}
button, input, select {
    font: inherit;
    color: inherit;
    margin: 0;
    padding: 0;
    border: 0;
    border-radius: 0;
    background: none;
}
svg {
    display: block;
    flex: none;
}
.defs {
    position: absolute;
    width: 0;
    height: 0;
}

/* title bar */
.titlebar {
    display: flex;
    align-items: center;
    flex: none;
    height: 26px;
    padding: 0 2px;
    background: linear-gradient(#3c97ff 0, #0a5ce8 3px, #0053e1 8px, #0060fb 18px, #0061fc 22px, #0039c4 26px);
}
.titlebar h1 {
    flex: 1;
    margin: 0 0 0 2px;
    color: #fff;
    font-size: 13px;
    font-weight: bold;
    text-shadow: 1px 1px #0a246a;
}
.window-buttons {
    display: flex;
    gap: 2px;
}
.window-buttons button {
    width: 21px;
    height: 21px;
    border: 1px solid #fff;
    border-radius: 3px;
    background: linear-gradient(135deg, #7d9ef0, #2b5de0 40%, #1a44c8);
}
.window-buttons .close {
    background: linear-gradient(135deg, #f0a088, #dd5030 40%, #c83010);
}
.window-buttons path {
    fill: #fff;
}

/* menu */
.menubar {
    display: flex;
    align-items: center;
    flex: none;
    height: 20px;
    padding: 0 2px 0 4px;
    border-bottom: 1px solid #fff;
}
.menubar > button {
    padding: 3px 6px 0;
    line-height: 16px;
    white-space: nowrap;
}
.menubar span {
    font-size: 10px;
}
.child-buttons {
    display: flex;
    gap: 2px;
    margin-left: auto;
}
.child-buttons button {
    width: 16px;
    height: 16px;
    border: 1px solid #fff;
    border-right-color: #d8d4c4;
    border-bottom-color: #d8d4c4;
    background: #f3f1e7;
}
.child-buttons path {
    fill: #716f64;
}

/* toolbars */
.toolbar-row {
    display: flex;
    flex: none;
    height: 28px;
    gap: 1px;
}
.toolbar {
    display: flex;
    align-items: center;
    height: 27px;
    padding: 3px 3px 0 3px;
    border: 1px solid #aca899;
    border-top-color: #fff;
    border-left: 0;
}
.toolbar.tight-end {
    padding-right: 2px;
}
.toolbar-row .toolbar + .toolbar {
    padding-left: 4px;
}
.grip {
    display: flex;
    flex: none;
    gap: 1px;
    width: 7px;
    height: 22px;
    margin-right: 2px;
}
.grip::before, .grip::after {
    content: "";
    flex: 1;
    border: 1px solid #fff;
    border-right-color: #aca899;
    border-bottom-color: #aca899;
}
.tool {
    display: flex;
    align-items: center;
    justify-content: center;
    flex: none;
    width: 23px;
    height: 22px;
}
.tool svg {
    width: 16px;
    height: 16px;
    fill: none;
    stroke: #000;
}
.tool text {
    fill: #000;
    stroke: none;
    font-size: 6px;
    font-weight: bold;
}
.tool .paper {
    fill: url(#paper);
    stroke: #3f6f9f;
}
.tool .shape {
    fill: #dbe8f5;
    stroke: #222;
}
.tool .steel {
    stroke: #3f6f9f;
}
.tool .ink {
    fill: #000;
    stroke: none;
}
.tool .node {
    fill: #0a74d0;
    stroke: none;
}
.tool.letter {
    font-family: "Open Sans", "Liberation Sans", sans-serif;
    font-size: 18px;
}
.drop {
    display: flex;
    align-items: center;
    justify-content: center;
    width: 13px;
    height: 22px;
}
.sep {
    flex: none;
    width: 2px;
    height: 22px;
    margin: 0 2px;
    border-left: 1px solid #c5c2b2;
    border-right: 1px solid #f8f7f0;
}

/* drop-downs */
.combo {
    display: flex;
    align-items: center;
    position: relative;
    height: 22px;
    margin-left: 1px;
    border: 1px solid #7f9db9;
    background: #fff;
}
.combo select {
    flex: 1;
    min-width: 0;
    height: 20px;
    padding: 0 18px 0 2px;
    appearance: none;
    font-size: 10px;
}
.combo select.cjk {
    padding-top: 2px;
    font-size: 12px;
}
.combo .arrow {
    position: absolute;
    top: 1px;
    right: 1px;
    width: 15px;
    height: 18px;
    border: 1px solid #c0d0f8;
    border-radius: 2px;
    background: linear-gradient(#d4e0ff, #b4c8f6);
    pointer-events: none;
}
.arrow::after, .sb::after {
    content: "";
    display: block;
    width: 6px;
    height: 6px;
    margin: 3px auto;
    border: solid #4d6185;
    border-width: 0 2px 2px 0;
    transform: rotate(45deg);
}
.combo.disabled {
    border-color: #c9c7ba;
    background: #ece9d8;
    color: #aca899;
}
.combo.disabled select {
    padding-left: 8px;
    opacity: 1;
}
.combo.disabled .arrow {
    border-color: #e4e2d6;
    background: #f3f1e8;
}
.combo.disabled .arrow::after {
    border-color: #c9c7ba;
}
.w-style { width: 100px; }
.w-layer { width: 300px; }
.w-color { width: 150px; }
.w-ltype { width: 160px; }
.w-lweight { width: 125px; }
.w-plot { width: 121px; }
.layer-state {
    margin-left: 4px;
}
.swatch {
    margin: 0 3px 0 5px;
}
.line-sample {
    margin-left: 4px;
}
.ref-name {
    width: 140px;
    height: 21px;
    border: 1px solid #fff;
    border-top: 2px solid #716f64;
    border-left: 2px solid #716f64;
}

/* workspace */
.workspace {
    display: flex;
    flex: 1;
    min-height: 0;
}
.toolbar.vertical {
    flex-direction: column;
    align-self: flex-start;
    flex: none;
    width: 26px;
    height: auto;
    padding: 1px 0 4px;
    border-left: 1px solid #fff;
}
.toolbar.draw {
    width: 25px;
    margin-right: 1px;
}
.vertical .grip {
    flex-direction: column;
    width: 20px;
    height: 7px;
    margin: 0 0 2px;
}
.vertical .sep {
    width: 20px;
    height: 2px;
    margin: 2px 0;
    border: 0;
    border-top: 1px solid #aca899;
    border-bottom: 1px solid #fff;
}
.document {
    display: flex;
    flex-direction: column;
    flex: 1;
    min-width: 0;
    border: solid;
    border-width: 2px 2px 1px;
    border-color: #8a887a #fff #fff #8a887a;
}
.view {
    display: flex;
    flex: 1;
    min-height: 0;
}

/* drawing */
.canvas {
    flex: 1;
    min-width: 0;
    height: 100%;
    background: #000;
    fill: none;
    stroke: #fff;
    shape-rendering: crispEdges;
}
.canvas polygon {
    vector-effect: non-scaling-stroke;
}
.canvas .hatch {
    stroke: #ff0;
    stroke-width: 208px;
    stroke-dasharray: 1 8.8;
}
.canvas .hidden-line {
    stroke: #808080;
    stroke-dasharray: 12 9;
}
.canvas .hidden-line.solid {
    stroke-dasharray: none;
}
.canvas .handle {
    fill: #0040ff;
    stroke: #5a5a5a;
}
.canvas .pointer {
    fill: #fff;
    stroke: #000;
}
.canvas text {
    stroke: none;
}
.canvas .note {
    fill: #ff0;
    font-size: 14px;
}
.canvas .ucs {
    fill: #fff;
    font-family: Lato, "Liberation Sans", sans-serif;
    font-size: 25px;
    font-weight: 300;
}

/* scroll bars */
.scroll-v {
    display: grid;
    grid-template-rows: 17px 47fr 17px 53fr 17px;
    width: 17px;
    background: linear-gradient(90deg, #f3f1ec, #fefefb);
}
.scroll-h {
    display: grid;
    grid-template-columns: 7px 17px 21fr 16px 79fr 17px;
    width: calc((100% - 17px) * .34);
    margin-right: 17px;
    background: linear-gradient(#f3f1ec, #fefefb);
}
.sb {
    display: flex;
    align-items: center;
    justify-content: center;
    margin: 1px;
    border: 1px solid #98b0e0;
    border-radius: 2px;
    background: linear-gradient(135deg, #d4e0ff, #b4c8f6);
}
.sb::after {
    margin: 0 0 3px;
}
.up::after {
    margin: 3px 0 0;
    transform: rotate(225deg);
}
.left::after {
    margin: 0 0 0 3px;
    transform: rotate(135deg);
}
.right::after {
    margin: 0 3px 0 0;
    transform: rotate(-45deg);
}
.thumb::after {
    width: 7px;
    height: 7px;
    margin: 0;
    border: 0;
    background: repeating-linear-gradient(#8cb0f8 0 1px, #eef4ff 1px 2px);
    transform: none;
}
.scroll-h .thumb::after {
    background: repeating-linear-gradient(90deg, #8cb0f8 0 1px, #eef4ff 1px 2px);
}
.split {
    margin: 1px;
    border: 1px solid #c5c2b2;
    background: #ece9d8;
}

/* layout tabs */
.sheet-row {
    display: flex;
    flex: none;
    height: 17px;
}
.sheets {
    display: flex;
    flex: 1;
}
.nav {
    display: flex;
    align-items: center;
    justify-content: center;
    width: 18px;
    height: 15px;
    margin-top: 1px;
    border: 1px solid #fff;
    border-right-color: #aca899;
    border-bottom-color: #aca899;
}
.sheet {
    position: relative;
    width: 58px;
    height: 15px;
    font-size: 10px;
    line-height: 15px;
}
.sheet svg {
    position: absolute;
    top: 0;
    left: 0;
    fill: none;
    stroke: #000;
}
.sheet.current {
    width: 42px;
    margin-left: 3px;
    background: #000;
    color: #fff;
    clip-path: polygon(0 0, 100% 0, 87% 100%, 13% 100%);
    font-size: 12px;
    font-weight: bold;
}

/* command line */
.dock {
    display: flex;
    flex: none;
    height: 85px;
    padding-top: 3px;
    border-bottom: 1px solid #8a887a;
    box-shadow: inset 0 -1px #fff, inset 0 -2px #aca899;
}
.dock .grip {
    width: 17px;
    height: auto;
    margin: 0;
    padding: 10px 3px 6px 6px;
    border-top: 1px solid #aca899;
    box-shadow: inset 0 1px #000;
}
.command {
    flex: 1;
    margin-bottom: 4px;
    border-top: 1px solid #aca899;
    box-shadow: inset 0 1px #000;
    padding-top: 6px;
    line-height: 13px;
    font-size: 13px;
}
.history {
    height: 56px;
    border: solid #aca899;
    border-width: 2px 0 1px;
    border-top-color: #000;
    border-left: 1px solid #000;
    background: #fff;
    overflow: hidden;
}
.history p {
    height: 13px;
    margin: 0 0 0 1px;
}
.prompt {
    display: flex;
    height: 15px;
    padding-left: 1px;
    border-left: 1px solid #000;
    background: #fff;
}
.prompt label {
    line-height: 16px;
}
.prompt input {
    flex: 1;
    outline: none;
}

/* status bar */
.statusbar {
    display: flex;
    flex: none;
    gap: 4px;
    height: 21px;
    padding: 2px 5px 1px;
    background: linear-gradient(#dedbc9, #ece9d8 4px, #ece9d8 16px, #dedbc9);
}
.coords {
    width: 250px;
    padding-left: 1px;
    border: 1px solid #fff;
    border-top-color: #aca899;
    border-left-color: #aca899;
    font-size: 10px;
    line-height: 19px;
}
.statusbar button {
    padding: 3px 1px 0;
    border: 1px solid #fff;
    border-right-color: #aca899;
    border-bottom-color: #aca899;
    line-height: 13px;
    white-space: nowrap;
}
.statusbar .on {
    border-color: #000 #fff #fff #000;
}
.tray {
    display: flex;
    align-items: center;
    gap: 9px;
    margin-left: auto;
}
.tray svg:first-child {
    border: 1px solid #fff;
    border-top-color: #aca899;
    border-left-color: #aca899;
    fill: none;
}

/* balloon */
.balloon {
    position: absolute;
    right: 3px;
    bottom: 29px;
    width: 184px;
    height: 74px;
    padding: 4px 14px;
    border: 1px solid #000;
    border-radius: 14px;
    background: #ffffe1;
}
.balloon h2 {
    display: flex;
    align-items: center;
    gap: 8px;
    height: 20px;
    margin: 0 0 4px -6px;
    font-size: 12px;
}
.balloon p {
    margin: 0;
    line-height: 18px;
    white-space: nowrap;
}
.balloon a {
    color: #00f;
}
.balloon > button {
    position: absolute;
    top: 8px;
    right: 8px;
    width: 16px;
    height: 16px;
    border: 1px solid #aca899;
    background: #ece9d8;
}
.tail {
    position: absolute;
    right: 20px;
    bottom: -24px;
    fill: #ffffe1;
}

/* forum mark */
.forum-mark {
    display: flex;
    position: absolute;
    right: 0;
    bottom: 0;
    width: 211px;
    height: 67px;
    padding: 5px 0 0 3px;
    background: rgba(255, 255, 255, .2);
    pointer-events: none;
}
.forum-mark svg {
    fill: none;
    stroke-width: 5px;
    opacity: .6;
}
.forum-mark div {
    display: flex;
    flex-direction: column;
    margin-left: -5px;
    font-family: "Liberation Sans", "Noto Sans CJK SC", sans-serif;
}
.forum-mark strong {
    padding-left: 12px;
    color: #4fb868;
    opacity: .6;
    font-size: 29px;
    line-height: 34px;
}
.forum-mark span {
    color: #c5d0c8;
    font-size: 16px;
    line-height: 22px;
}
```
